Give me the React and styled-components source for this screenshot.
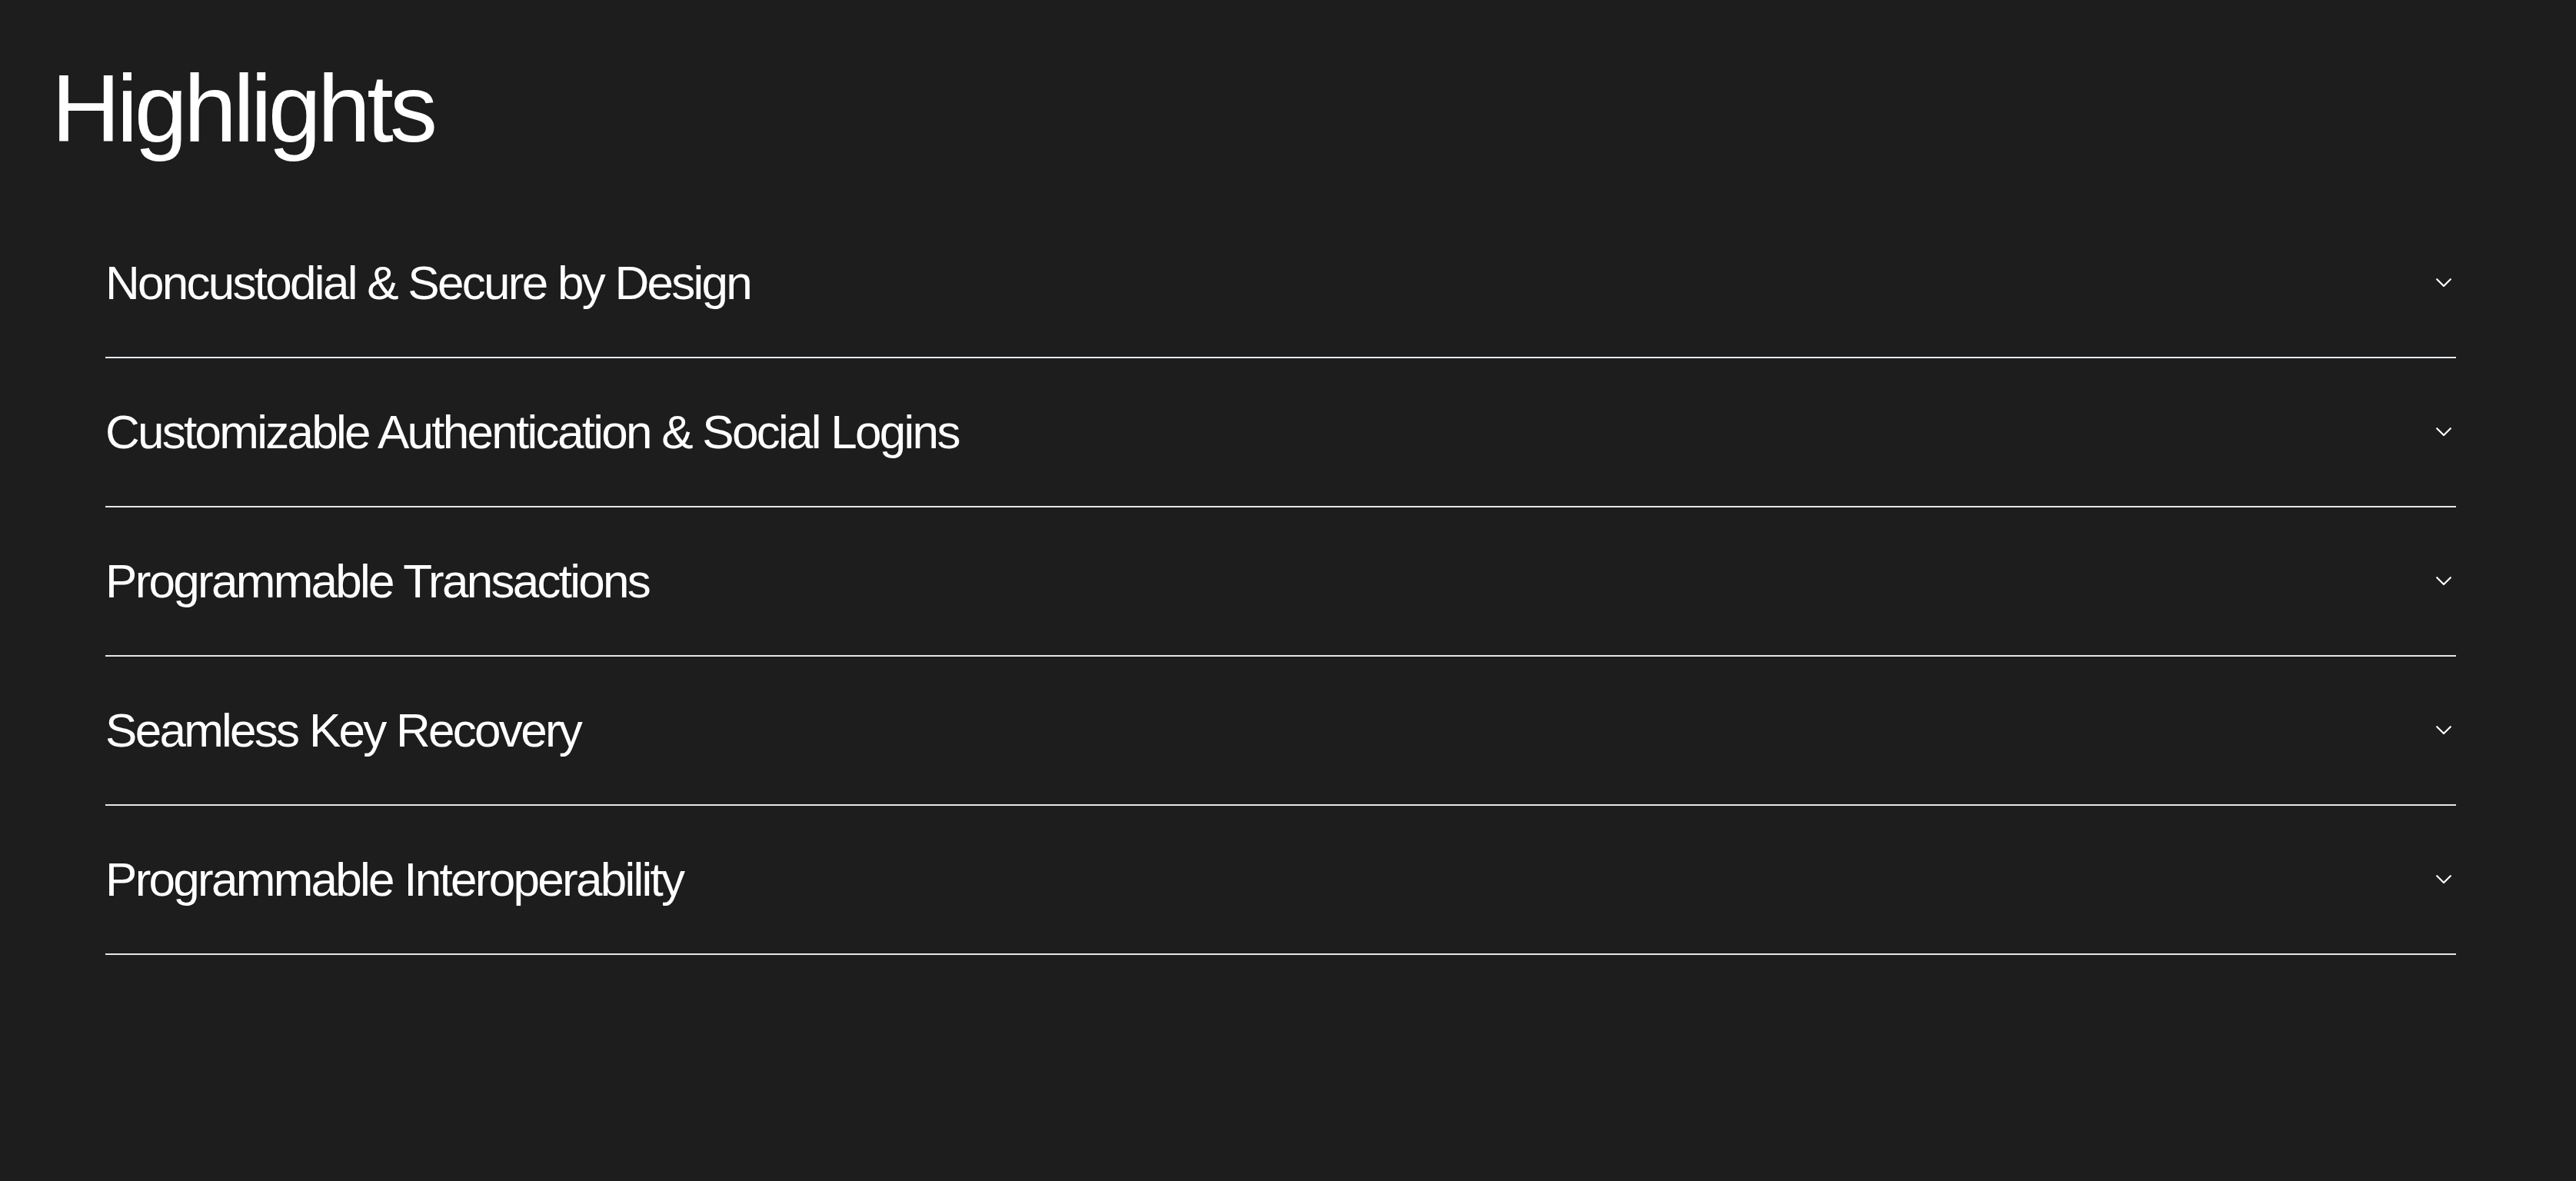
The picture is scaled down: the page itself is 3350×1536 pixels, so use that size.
import React, { useState } from "react";
import styled, { createGlobalStyle } from "styled-components";

const GlobalStyle = createGlobalStyle`
  html, body {
    margin: 0;
    padding: 0;
    background: #1d1d1d;
  }
  body {
    font-family: "Liberation Sans", Arial, Helvetica, sans-serif;
    color: #ffffff;
    -webkit-font-smoothing: antialiased;
  }
  * { box-sizing: border-box; }
`;

const Page = styled.main`
  min-height: 1536px;
  background: #1d1d1d;
  padding: 79px 0 0 0;
`;

const Title = styled.h1`
  margin: 0;
  padding-left: 67px;
  font-size: 124px;
  line-height: 1;
  font-weight: 400;
  letter-spacing: -0.038em;
  color: #ffffff;
`;

const List = styled.div`
  margin-top: 69px;
  padding: 0 156px 0 137px;
  display: flex;
  flex-direction: column;
`;

const Item = styled.div`
  border-bottom: 2px solid #e5e7eb;
`;

const Trigger = styled.button`
  width: 100%;
  height: 192px;
  display: flex;
  align-items: center;
  justify-content: space-between;
  padding: 0 6px 0 0;
  margin: 0;
  background: transparent;
  border: 0;
  color: #ffffff;
  cursor: pointer;
  text-align: left;
  font-family: inherit;
`;

const Label = styled.span`
  font-size: 62px;
  line-height: 1;
  font-weight: 400;
  letter-spacing: -0.044em;
`;

const Chevron = styled.svg`
  width: 20px;
  height: 12px;
  flex: none;
  transform: rotate(${(p) => (p.$open ? "180deg" : "0deg")});
  transition: transform 0.2s ease;
`;

const Panel = styled.div`
  padding: 0 0 48px 0;
  font-size: 32px;
  line-height: 1.5;
  color: #cfcfcf;
  letter-spacing: -0.01em;
`;

const items = [
  {
    title: "Noncustodial & Secure by Design",
    body: "Users keep full control of their keys, with security built into every layer.",
  },
  {
    title: "Customizable Authentication & Social Logins",
    body: "Let users sign in with the methods they already know and trust.",
  },
  {
    title: "Programmable Transactions",
    body: "Define rules and automation for how transactions are created and approved.",
  },
  {
    title: "Seamless Key Recovery",
    body: "Recover access to wallets without compromising on security.",
  },
  {
    title: "Programmable Interoperability",
    body: "Connect across chains and applications with programmable building blocks.",
  },
];

export default function App() {
  const [open, setOpen] = useState(-1);
  return (
    <>
      <GlobalStyle />
      <Page>
        <Title>Highlights</Title>
        <List>
          {items.map((it, i) => (
            <Item key={it.title}>
              <Trigger onClick={() => setOpen(open === i ? -1 : i)}>
                <Label>{it.title}</Label>
                <Chevron $open={open === i} viewBox="0 0 20 12" fill="none">
                  <path
                    d="M1.2 1.2 L10 10 L18.8 1.2"
                    stroke="#ffffff"
                    strokeWidth="2.2"
                    strokeLinecap="round"
                    strokeLinejoin="round"
                  />
                </Chevron>
              </Trigger>
              {open === i && <Panel>{it.body}</Panel>}
            </Item>
          ))}
        </List>
      </Page>
    </>
  );
}
